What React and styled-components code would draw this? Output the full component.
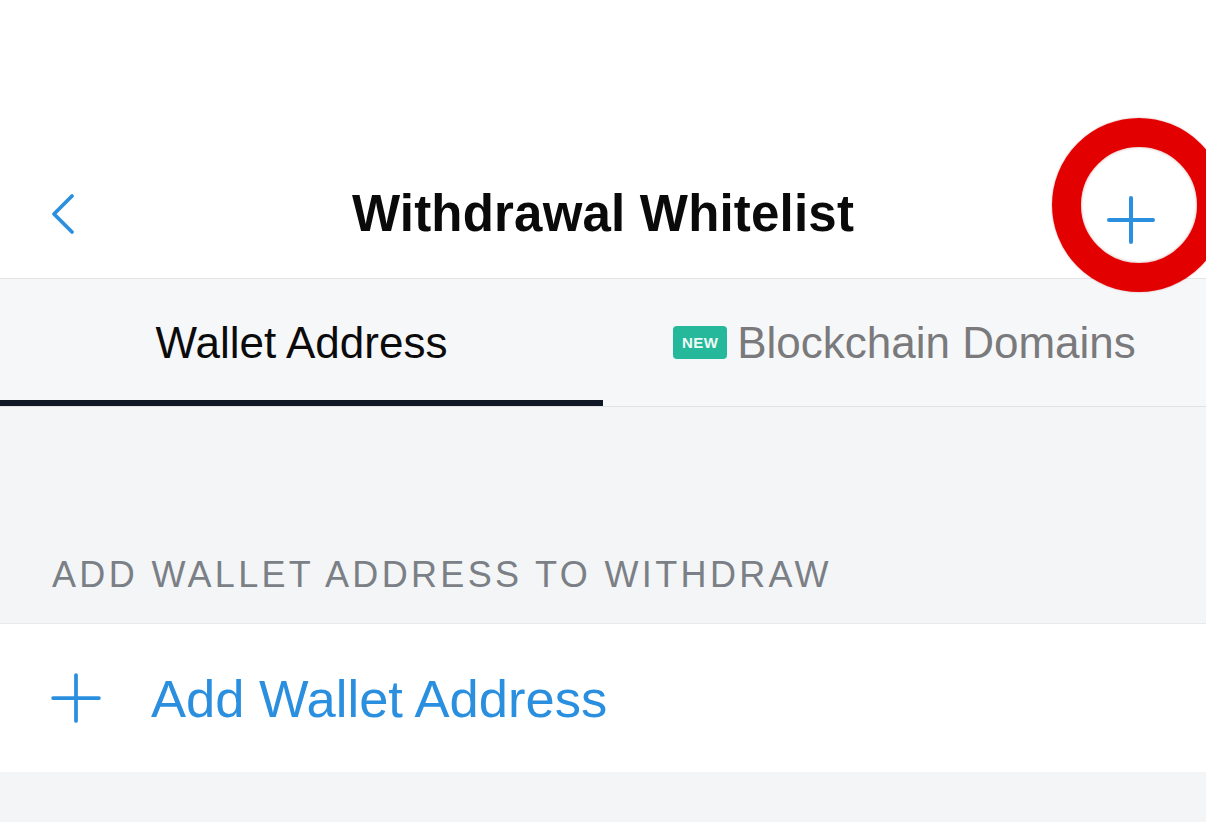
import React from 'react'
import styled, { createGlobalStyle } from 'styled-components'

const GlobalStyle = createGlobalStyle`
  html, body {
    margin: 0;
    padding: 0;
    background: #f4f5f7;
  }
  * { box-sizing: border-box; }
`

const Page = styled.div`
  width: 1206px;
  height: 822px;
  overflow: hidden;
  background: #f4f5f7;
  font-family: "Liberation Sans", Arial, sans-serif;
`

const Header = styled.header`
  position: relative;
  height: 279px;
  background: #fff;
  border-bottom: 1px solid #e3e4e6;
  display: flex;
  align-items: flex-end;
  padding: 0 0 38px;
`

const HeaderRow = styled.div`
  flex: 1;
  height: 56px;
  display: grid;
  grid-template-columns: 160px 1fr 160px;
  align-items: center;
`

const BackButton = styled.button`
  border: none;
  background: none;
  padding: 0 0 0 50px;
  display: flex;
  align-items: center;
  justify-self: start;
`

const Title = styled.h1`
  margin: 0;
  text-align: center;
  font-size: 51px;
  font-weight: 700;
  color: #0a0a0a;
  letter-spacing: 0.2px;
`

const AddButton = styled.button`
  border: none;
  background: none;
  padding: 0 51px 0 0;
  display: flex;
  align-items: center;
  justify-self: end;
  position: relative;
  top: 6px;
`

// red annotation ring drawn over the header's add button
const Ring = styled.div`
  position: absolute;
  left: 1052px;
  top: 118px;
  width: 174px;
  height: 174px;
  border-radius: 50%;
  border: 29px solid #e30000;
  box-shadow: inset 0 0 3px rgba(120, 0, 0, 0.35), 0 0 2px rgba(150, 0, 0, 0.4);
  z-index: 2;
  pointer-events: none;
`

const Tabs = styled.nav`
  display: flex;
  height: 128px;
  background: #f6f7f9;
  border-bottom: 1px solid #e1e2e4;
`

const Tab = styled.div`
  flex: 1;
  display: flex;
  align-items: center;
  justify-content: center;
  gap: 10px;
  padding-top: 6px;
  font-size: 44px;
  color: ${p => (p.active ? '#0b0b0b' : '#7a7a7c')};
  border-bottom: 6px solid ${p => (p.active ? '#0f1626' : 'transparent')};
`

const NewBadge = styled.span`
  display: inline-flex;
  align-items: center;
  justify-content: center;
  width: 54px;
  height: 33px;
  border-radius: 4px;
  background: #26b89a;
  color: #eefaf6;
  font-size: 15px;
  font-weight: 700;
  letter-spacing: 0.4px;
`

const SectionLabel = styled.div`
  margin: 148px 0 28px;
  padding-left: 52px;
  line-height: 40px;
  font-size: 36px;
  letter-spacing: 3.35px;
  color: #7b7f86;
`

const ActionRow = styled.div`
  height: 149px;
  background: #fff;
  border-top: 1px solid #e8e9eb;
  display: flex;
  align-items: center;
  gap: 50px;
  padding-left: 51px;
  color: #2b8fdf;
  font-size: 52.5px;
`

const PlusIcon = ({ size = 48, stroke = 4 }) => (
  <svg width={size} height={size} viewBox="0 0 48 48" fill="none">
    <path
      d="M24 2v44M2 24h44"
      stroke="#2b8fdf"
      strokeWidth={stroke}
      strokeLinecap="round"
    />
  </svg>
)

const App = () => {
  return (
    <Page>
      <GlobalStyle />
      <Header>
        <HeaderRow>
          <BackButton>
            <svg width="26" height="44" viewBox="0 0 26 44" fill="none">
              <path
                d="M22 4L4 22l18 18"
                stroke="#2b8fdf"
                strokeWidth="3.8"
                strokeLinecap="round"
                strokeLinejoin="round"
              />
            </svg>
          </BackButton>
          <Title>Withdrawal Whitelist</Title>
          <AddButton>
            <PlusIcon size={48} stroke={4} />
          </AddButton>
        </HeaderRow>
        <Ring />
      </Header>
      <Tabs>
        <Tab active>Wallet Address</Tab>
        <Tab>
          <NewBadge>NEW</NewBadge>
          Blockchain Domains
        </Tab>
      </Tabs>
      <SectionLabel>ADD WALLET ADDRESS TO WITHDRAW</SectionLabel>
      <ActionRow>
        <PlusIcon size={50} stroke={3.6} />
        Add Wallet Address
      </ActionRow>
    </Page>
  )
}

export default App
